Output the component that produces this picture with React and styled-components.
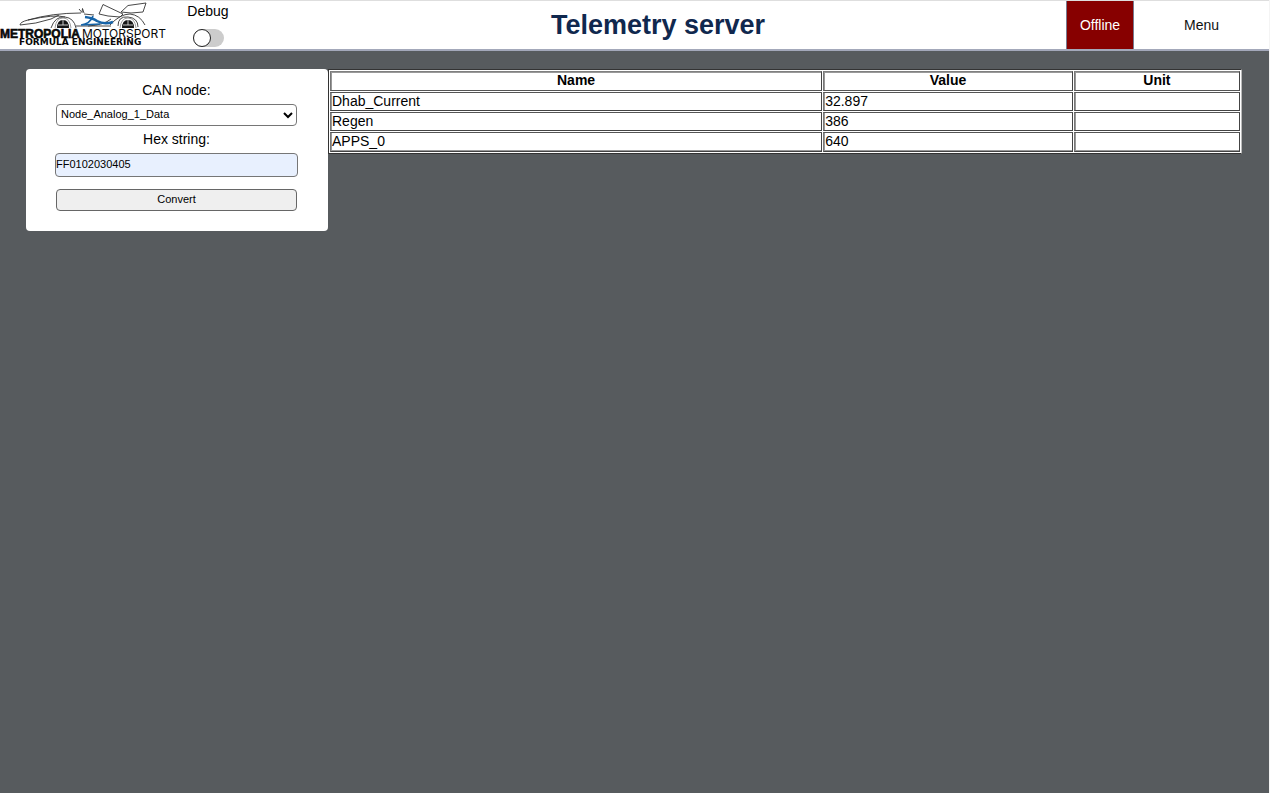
import React, { useState } from "react";
import styled, { createGlobalStyle } from "styled-components";

const GlobalStyle = createGlobalStyle`
  *, *::before, *::after { box-sizing: border-box; }
  html { background: #575b5e; }
  body {
    margin: 0;
    font-family: "Liberation Sans", Arial, sans-serif;
    font-size: 14px;
    line-height: 16px;
    color: #000;
  }
`;

const Page = styled.div`
  min-height: 100vh;
  background: #575b5e;
  border-right: 1px solid #f4f4f4;
`;

const Header = styled.header`
  display: flex;
  height: 51px;
  background: #fff;
  border-top: 1px solid #dedede;
  border-bottom: 2px solid #a3a8ba;
`;

const HomeLink = styled.a`
  display: block;
  width: 166px;
  flex: none;
`;

const LogoSvg = styled.svg`
  display: block;
`;

const DebugBox = styled.label`
  flex: none;
  width: 84px;
  padding-top: 2px;
  display: flex;
  flex-direction: column;
  align-items: center;
  gap: 10px;
`;

const Switch = styled.input`
  appearance: none;
  display: flex;
  margin: 0;
  width: 31px;
  height: 18px;
  border-radius: 9px;
  background: #ccc;

  &::before {
    content: "";
    width: 18px;
    height: 18px;
    border: 1px solid #222;
    border-radius: 50%;
    background: #fff;
  }

  &:checked {
    justify-content: flex-end;
    background: #10284e;
  }
`;

const Title = styled.h1`
  flex: 1;
  margin: 0;
  text-align: center;
  font-size: 27px;
  line-height: 48px;
  color: #10284e;
`;

const HeaderSide = styled.div`
  display: flex;
  flex: none;
`;

const HeaderButton = styled.button`
  width: ${(p) => p.$width}px;
  padding: 0;
  border: 0 solid #777b90;
  border-width: ${(p) => (p.$filled ? "0 1px" : "0")};
  background: ${(p) => (p.$filled ? "#870000" : "#fff")};
  color: ${(p) => (p.$filled ? "#fff" : "#111")};
  font: inherit;
`;

const Main = styled.main`
  display: flex;
  align-items: flex-start;
  padding: 18px 27px 0 26px;
`;

const Form = styled.form`
  flex: 0 0 302px;
  padding: 13px 30px 20px 29px;
  display: flex;
  flex-direction: column;
  background: #fff;
  border-radius: 4px;
`;

const FieldLabel = styled.label`
  text-align: center;
  line-height: 16px;
  margin-bottom: 6px;
`;

const controlFont = `
  font-family: "Liberation Sans", Arial, sans-serif;
  font-size: 11px;
  color: #000;
  border-radius: 4px;
`;

const Select = styled.select`
  ${controlFont}
  height: 22px;
  margin: 0 1px 5px;
  padding: 0 0 2px;
  border: 1px solid #767676;
  background: #fff;
`;

const TextInput = styled.input`
  ${controlFont}
  height: 24px;
  padding: 0 0 2px;
  border: 1px solid #767676;
  background: #e8f0fe;
`;

const SubmitButton = styled.button`
  ${controlFont}
  height: 22px;
  margin: 12px 1px 0;
  padding: 0 0 2px;
  border: 1px solid #666;
  background: #efefef;
`;

const Table = styled.table`
  flex: 1;
  min-width: 0;
  table-layout: fixed;
  border: 1px solid;
  border-color: #333 #bbb #333 #333;
  border-collapse: separate;
  border-spacing: 1px;
  background: #fff;
`;

const HeadCell = styled.th`
  width: ${(p) => p.$width};
  height: 20px;
  padding: 0 1px 2px;
  border: 1px solid;
  border-color: #808080 #444 #555 #777;
  box-shadow: inset 1px 1px #999;
`;

const Cell = styled.td`
  height: ${(p) => (p.$last ? 20 : 19)}px;
  padding: 0 1px ${(p) => (p.$last ? 2 : 1)}px;
  border: 1px solid;
  border-color: #555 #444 #444 #777;
  box-shadow: inset 1px ${(p) => (p.$last ? "-1px" : "0")} #999;
`;

function Logo() {
  return (
    <LogoSvg width="166" height="48" viewBox="0 1 166 48" role="img" aria-label="Metropolia Motorsport">
      <g fill="none" stroke="#333" strokeWidth="0.9">
        <path d="M20 25 Q20 22 28 20 Q52 13 81 13 M20 25 Q36 24 51 19 L59 15" />
        <path d="M28 20 Q55 14 65 17 M79 9 L82 12.5 L82.5 8.5 L84 13" />
        <path d="M51 28 Q55 16 65 17 Q74 18 76 28" />
        <path d="M84 14 L94 15 M99 14 L103 4.5 L123 14 L120 17 L108 16 Z" />
        <path d="M121 12 L128 5.5 L146 3 L143 12 L131 13 M121 12 L131 13" />
        <path d="M110 25 Q120 14 130 14 Q140 15 145 25 M118 26 Q118 16 128 17 Q138 18 138 27" />
        <path d="M76 26 L111 26 M88 26 Q104 25 111 19" />
      </g>
      <g fill="none" stroke="#1764a8">
        <path d="M85 17 Q93 18 97 21 Q104 25 113 22" strokeWidth="2.4" />
        <path d="M93 16 Q90 24 81 25 L100 24" strokeWidth="1.7" />
      </g>
      {[63, 128].map((x) => (
        <g key={x}>
          <path d={`M${x - 8} 28 Q${x - 7} 18 ${x} 18 Q${x + 7} 18 ${x + 8} 28`} fill="#fff" stroke="#888" strokeWidth="0.8" />
          <path d={`M${x - 6} 28 Q${x - 6} 20 ${x} 20 Q${x + 6} 20 ${x + 6} 28 Z`} fill="#151515" />
          <path d={`M${x} 20 V25 M${x - 5} 25 H${x + 5}`} stroke="#ddd" strokeWidth="0.9" />
        </g>
      ))}
      <g fill="#080808">
        <text x="0" y="38" fontFamily="Liberation Sans" fontWeight="700" fontSize="12" stroke="#080808" strokeWidth="0.6">METROPOLIA</text>
        <text x="82" y="38" fontFamily="Inter" fontWeight="400" fontSize="12">MOTORSPORT</text>
        <text x="19" y="45" fontFamily="DejaVu Sans" fontWeight="700" fontSize="9">FORMULA ENGINEERING</text>
      </g>
    </LogoSvg>
  );
}

const rows = [
  { name: "Dhab_Current", value: "32.897", unit: "" },
  { name: "Regen", value: "386", unit: "" },
  { name: "APPS_0", value: "640", unit: "" },
];

export default function App() {
  const [hex, setHex] = useState("FF0102030405");
  return (
    <>
      <GlobalStyle />
      <Page>
        <Header>
          <HomeLink href="#"><Logo /></HomeLink>
          <DebugBox>
            Debug
            <Switch type="checkbox" />
          </DebugBox>
          <Title>Telemetry server</Title>
          <HeaderSide>
            <HeaderButton type="button" $filled $width={68}>Offline</HeaderButton>
            <HeaderButton type="button" $width={135}>Menu</HeaderButton>
          </HeaderSide>
        </Header>
        <Main>
          <Form onSubmit={(e) => e.preventDefault()}>
            <FieldLabel htmlFor="node">CAN node:</FieldLabel>
            <Select id="node">
              <option>Node_Analog_1_Data</option>
            </Select>
            <FieldLabel htmlFor="hex">Hex string:</FieldLabel>
            <TextInput id="hex" type="text" value={hex} onChange={(e) => setHex(e.target.value)} />
            <SubmitButton type="submit">Convert</SubmitButton>
          </Form>
          <Table>
            <thead>
              <tr>
                <HeadCell $width="54.2%">Name</HeadCell>
                <HeadCell $width="27.5%">Value</HeadCell>
                <HeadCell $width="18.3%">Unit</HeadCell>
              </tr>
            </thead>
            <tbody>
              {rows.map((r, i) => (
                <tr key={r.name}>
                  <Cell $last={i === rows.length - 1}>{r.name}</Cell>
                  <Cell $last={i === rows.length - 1}>{r.value}</Cell>
                  <Cell $last={i === rows.length - 1}>{r.unit}</Cell>
                </tr>
              ))}
            </tbody>
          </Table>
        </Main>
      </Page>
    </>
  );
}
